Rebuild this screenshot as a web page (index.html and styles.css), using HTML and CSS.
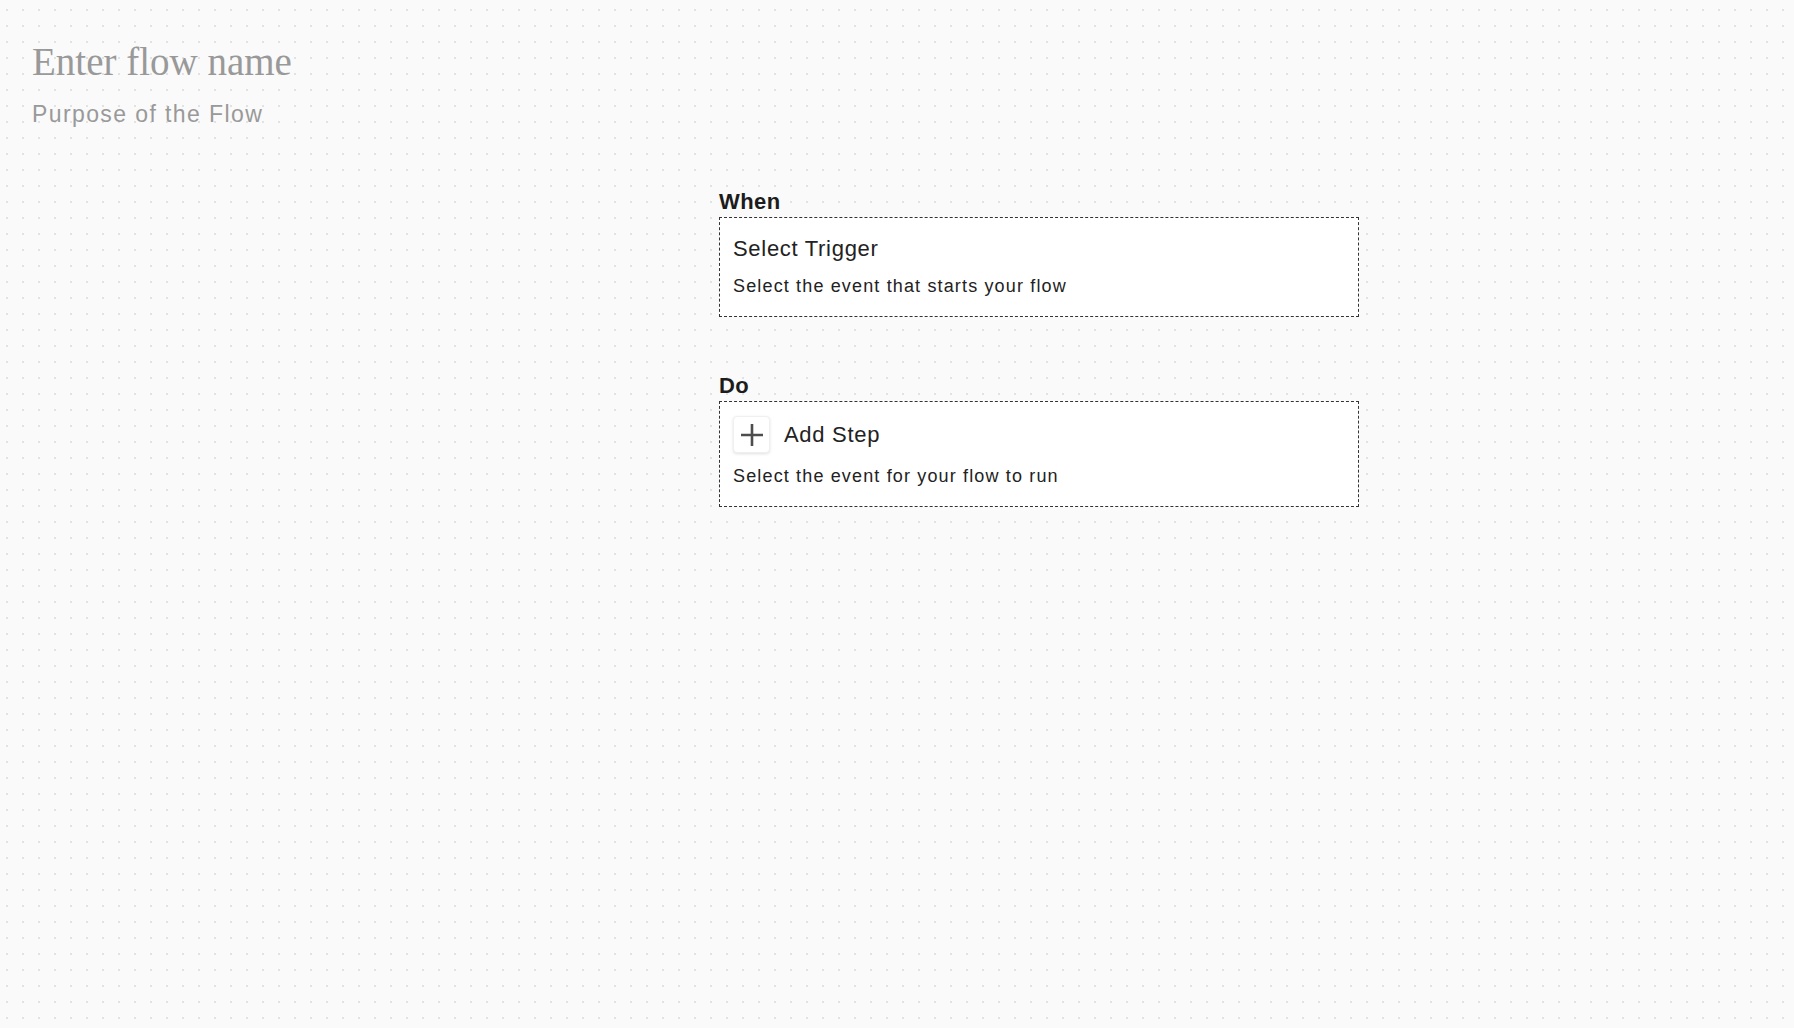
FILE: index.html
```html
<!DOCTYPE html>
<html lang="en">
<head>
  <meta charset="UTF-8">
  <meta name="viewport" content="width=device-width, initial-scale=1.0">
  <title>Flow Builder</title>
  <link rel="stylesheet" href="styles.css">
</head>
<body>

  <!-- flow name + purpose -->
  <div class="flow-header">
    <div class="flow-name">Enter flow name</div>
    <div class="flow-purpose">Purpose of the Flow</div>
  </div>

  <div class="builder">
    <!-- trigger -->
    <div class="section">
      <div class="section-label">When</div>
      <div class="card card-trigger">
        <div class="card-title">Select Trigger</div>
        <div class="card-desc">Select the event that starts your flow</div>
      </div>
    </div>

    <!-- steps -->
    <div class="section section-do">
      <div class="section-label">Do</div>
      <div class="card card-steps">
        <div class="step-row">
          <button type="button" class="add-btn">
            <svg width="22" height="22" viewBox="0 0 22 22">
              <path d="M11 0v22M0 11h22" stroke="#4d4d4d" stroke-width="2.6" fill="none"/>
            </svg>
          </button>
          <div class="card-title">Add Step</div>
        </div>
        <div class="card-desc">Select the event for your flow to run</div>
      </div>
    </div>
  </div>

</body>
</html>
```

FILE: styles.css
```css
body {
  margin: 0;
  min-height: 100vh;
  font-family: "Liberation Sans", Arial, sans-serif;
  color: #1c1c1c;
  background-color: #fafafa;
  background-image: radial-gradient(circle, #e2e2e2 1px, transparent 1.5px);
  background-size: 16px 16px;
  background-position: -1px 2px;
}

.flow-header {
  padding: 40px 0 0 32px;
}

.flow-name {
  font-family: "Liberation Serif", "Times New Roman", serif;
  font-size: 39px;
  line-height: 44px;
  color: #999;
}

.flow-purpose {
  margin-top: 18px;
  font-size: 23px;
  line-height: 25px;
  letter-spacing: 1.4px;
  color: #999;
}

.builder {
  width: 640px;
  margin: 63px 0 0 719px;
}

.section-do {
  margin-top: 57px;
}

.section-label {
  font-size: 22px;
  font-weight: 700;
  line-height: 24px;
  letter-spacing: 0.4px;
  color: #1c1c1c;
  margin-bottom: 3px;
}

.card {
  background-color: #fff;
  border: 1px dashed #333;
  padding: 19px 13px;
}

.card-steps {
  padding-top: 14px;
}

.card-title {
  font-size: 22px;
  line-height: 24px;
  letter-spacing: 0.7px;
  color: #222;
}

.card-desc {
  margin-top: 15px;
  font-size: 18px;
  line-height: 21px;
  letter-spacing: 1.15px;
  color: #222;
}

.card-steps .card-desc {
  margin-top: 13px;
}

.step-row {
  display: flex;
  align-items: center;
  gap: 14px;
}

.add-btn {
  width: 37px;
  height: 37px;
  padding: 0;
  display: flex;
  align-items: center;
  justify-content: center;
  background-color: #fff;
  border: 1px solid #f0f0f0;
  border-radius: 4px;
  box-shadow: 0 1px 3px rgba(0, 0, 0, 0.12);
  cursor: pointer;
}
```
